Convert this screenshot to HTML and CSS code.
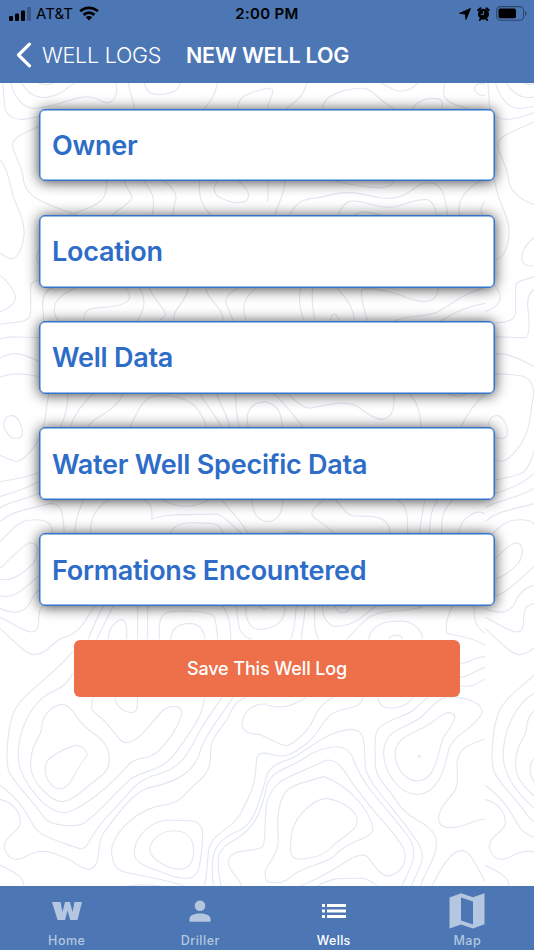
FILE: index.html
```
<!DOCTYPE html>
<html lang="en">
<head>
  <meta charset="UTF-8">
  <meta name="viewport" content="width=device-width, initial-scale=1.0">
  <title>New Well Log</title>
  <link rel="stylesheet" href="styles.css">
</head>
<body>

<header class="header">
  <div class="status">
    <div class="status-left">
      <svg class="signal" viewBox="0 0 22 14" width="22" height="14">
        <rect x="0" y="9" width="4" height="5" rx="1"/>
        <rect x="6" y="6.500" width="4" height="7.500" rx="1"/>
        <rect x="12" y="3.500" width="4" height="10.500" rx="1"/>
        <rect x="18" y="0" width="4" height="14" rx="1" opacity=".25"/>
      </svg>
      <span class="carrier">AT&amp;T</span>
      <svg class="wifi" viewBox="0 0 20 15" width="20" height="15">
        <path d="M1.200 5.300C6 .7 14 .7 18.800 5.300M4.600 8.900c3.200-2.900 7.600-2.900 10.800 0" fill="none" stroke="#000" stroke-width="2.800"/>
        <path d="M6.700 11.100c2-1.600 4.600-1.600 6.600 0L10 14.500z"/>
      </svg>
    </div>
    <span class="clock">2:00 PM</span>
    <div class="status-right">
      <svg viewBox="0 0 12 12" width="12" height="12"><path d="M11.500.5 7 11.500 6.300 6 .5 5.400z" stroke="#000" stroke-width=".9" stroke-linejoin="round"/></svg>
      <svg viewBox="0 0 13 14" width="13" height="14">
        <circle cx="6.500" cy="7.200" r="5.500"/>
        <path d="M1.200 3.300 3.500 1.200M11.800 3.300 9.500 1.200M2.800 13l1.200-1.500M10.200 13 9 11.500" stroke="#000" stroke-width="1.900" stroke-linecap="round"/>
        <path d="M6.600 4v3.500H4" fill="none" stroke="#4c76b4" stroke-width="1"/>
      </svg>
      <svg viewBox="0 0 32 15" width="32" height="15">
        <rect x=".6" y=".6" width="27" height="13.600" rx="3.800" fill="none" stroke="#000" stroke-opacity=".4" stroke-width="1.100"/>
        <rect x="2.500" y="2.500" width="17.500" height="9.800" rx="1.700"/>
        <path d="M29 5c2 .6 2 4.200 0 4.800z" opacity=".4"/>
      </svg>
    </div>
  </div>
  <div class="nav">
    <svg class="back" viewBox="0 0 16 26" width="16" height="26"><path d="M13.500 2.200 2.500 13l11 10.800" fill="none" stroke="#fff" stroke-width="3.200" stroke-linecap="round" stroke-linejoin="round"/></svg>
    <span class="nav-back">WELL LOGS</span>
    <h1 class="nav-title">NEW WELL LOG</h1>
  </div>
</header>

<main class="main">
  <!-- topographic lines, one 485px tile repeated across -->
  <svg class="topo" viewBox="0 249 1602 2409" width="534" height="803">
    <defs>
      <pattern id="topo" width="1455" height="2700" patternUnits="userSpaceOnUse">
        <g fill="none" stroke="#e2e8f2" stroke-width="3.500">
          <g transform="translate(0 240)">
            <path d="M8 0 14 80C18 105 40 120 70 118 100 117 125 106 147 98M30 0C40 50 70 85 100 85 150 85 170 70 230 55 290 40 300 70 325 68 350 65 355 30 345 0M60 0C80 40 110 55 140 52 190 45 200 20 225 9L235 0M100 0C130 20 150 18 175 0"/>
            <path d="M147 126C80 155 38 170 38 195 38 220 70 260 70 300 80 360 150 375 230 405M0 240C20 260 30 310 40 350 60 400 75 430 72 465 68 510 50 540 30 536 10 530 5 520 0 518M0 586C30 610 55 645 43 665 35 680 15 690 0 695"/>
            <path d="M0 733C30 725 92 735 92 695V620C92 605 105 603 150 590M0 778C30 765 70 773 118 773 140 773 130 700 128 680 126 650 135 630 160 622M150 470C110 500 95 550 130 557L147 558"/>
            <path d="M320 303C320 350 310 365 270 382 240 395 220 403 200 405M372 303C380 330 400 345 396 355 385 375 355 385 338 405M432 303C450 330 470 345 456 405M492 303C520 325 530 340 528 355 520 385 520 390 519 405M598 303C597 350 600 370 632 405M655 303C635 320 640 345 665 355 690 368 715 372 738 364 755 345 740 320 715 303"/>
            <path d="M384 0C388 40 400 60 404 85M430 0C440 45 460 45 490 43 530 38 540 25 542 0M655 0C645 45 635 60 612 85M712 85C715 50 740 40 801 24 830 28 818 35 801 85"/>
            <path d="M225 624C190 640 160 660 163 695 165 710 172 718 178 724M375 622C400 650 390 665 360 675 300 690 245 670 253 724M418 622C440 660 435 690 410 724M447 622C460 660 500 690 497 705 490 715 480 718 478 724M565 622C560 670 510 690 524 724M617 622C620 660 670 680 670 724M720 622C680 640 670 660 682 680 690 700 695 710 700 724M770 622C735 650 720 680 740 724"/>
          </g>
          <g transform="translate(801 240)">
            <path d="M122 0C105 70 70 70 58 85M165 85C180 55 170 55 230 32 330 10 300 40 378 85M325 0C380 30 390 35 405 33 435 30 440 18 465 0M435 85C460 60 470 55 510 55 530 60 527 75 525 85M534 0C530 40 525 50 540 60 555 75 580 78 603 85M655 45C635 50 620 35 623 22 630 8 645 8 654 14"/>
            <path d="M2 303C5 350 3 360 0 365M54 303C55 340 30 375 24 405M67 405C100 345 130 360 170 350 250 325 290 345 340 354 440 365 430 300 500 310 530 320 535 360 542 405M213 405C235 350 260 360 310 372 400 400 400 360 480 358 500 365 505 385 509 405M262 405C285 390 300 395 340 405M205 303C250 315 280 320 330 323 360 322 375 318 380 303M578 405C565 355 610 320 640 303M654 365C640 380 640 390 645 405"/>
            <path d="M102 622C92 660 98 690 112 724M138 622C130 660 140 690 143 724M210 622C250 670 260 690 263 724M190 724C195 690 210 700 218 724M302 724C285 670 280 640 285 628 310 620 370 635 400 645 460 670 485 670 500 655 513 642 514 635 514 622M385 724C410 705 450 715 510 697 560 670 570 650 654 622M520 724C560 700 580 685 654 670"/>
          </g>
          <g transform="translate(0 1050)">
            <path d="M0 25C40 0 70 8 147 50M0 82C40 65 75 73 110 78 150 90 150 130 140 165 135 220 130 240 110 280 80 320 60 340 40 332 15 325 10 320 0 315M38 197C10 195 5 230 20 245 30 270 60 270 66 255 72 235 55 200 38 197M0 395C50 385 100 380 118 365 140 340 145 310 150 290M0 440C40 425 100 415 147 370M0 473C50 445 90 450 147 415"/>
            <path d="M0 515C40 480 80 480 150 460 185 460 188 480 193 550M0 575C50 520 70 510 95 510 150 505 155 530 158 550M0 655C40 620 60 590 90 578 125 580 110 625 100 640 60 680 30 695 0 687M0 737C40 750 70 720 147 650M0 775C30 790 70 795 90 760 105 720 130 710 147 707"/>
            <path d="M202 130C207 160 195 200 182 232M280 130C245 165 225 190 210 232M372 130C340 190 280 200 262 232M390 232C415 180 430 135 475 137 570 135 600 170 620 232M598 130C615 160 650 200 665 232M650 130C660 165 680 190 690 232M707 130C705 180 715 210 717 232M801 155C760 155 730 180 745 232"/>
            <path d="M250 450C230 500 227 510 225 550M325 450C280 480 270 510 272 550M430 450C455 460 458 480 455 507 500 490 560 495 650 492 670 495 690 520 725 550M490 450C530 475 580 475 625 450M510 550C530 510 580 518 630 520 660 520 665 540 670 550M665 450C700 490 720 510 745 550M755 450C760 490 770 510 801 515"/>
          </g>
          <g transform="translate(801 1050)">
            <path d="M20 130C60 165 80 200 110 232M0 158C35 165 45 200 45 232M65 135C100 165 110 175 130 174 180 165 230 150 270 168 310 200 345 220 365 200 385 185 382 150 380 130M428 130C450 160 460 180 462 232M540 130C560 140 580 145 600 130M655 132C620 165 600 190 582 232"/>
            <path d="M48 450C45 500 25 515 0 515M203 550C160 510 130 505 135 485 145 465 165 458 170 450M205 450C235 480 240 495 260 498 310 500 365 490 370 550M390 450C415 460 423 480 422 550M473 450C465 500 460 520 458 550M513 450C490 480 490 510 487 550M558 450C525 480 523 510 524 550M655 495C640 470 580 500 575 550M50 550C70 543 90 543 110 550"/>
          </g>
          <g transform="translate(0 1800)">
            <path d="M0 52C40 70 70 95 95 96 125 95 110 60 120 30 122 20 130 15 147 10M0 85C50 130 80 165 105 164 150 160 160 115 200 110 250 90 260 50 285 17"/>
            <path d="M220 152C150 240 60 280 38 345 20 400 18 480 25 510 40 550 90 590 130 650 150 680 220 680 245 673 290 650 340 580 395 535 440 505 490 520 540 440 590 370 610 340 613 290"/>
            <path d="M220 218C200 255 180 265 150 278 90 310 50 400 55 480 65 550 140 640 195 638 240 630 330 560 380 500 410 465 430 485 470 458 500 430 530 390 545 345 550 320 520 310 490 330 450 370 420 425 380 428 355 430 340 380 290 343 275 330 270 330 280 290"/>
            <path d="M183 313C150 320 125 350 125 385 120 420 90 430 92 500 95 550 160 610 190 604 220 600 230 585 300 530 330 510 335 480 320 440 300 400 260 400 230 350 215 325 200 312 183 313M230 436C200 440 150 470 140 485 125 520 150 570 185 566 215 560 225 510 262 465 260 450 245 435 230 436"/>
            <path d="M0 555C60 600 80 640 105 685 140 720 200 730 240 747 265 750 270 700 330 640 390 580 400 550 450 530 540 510 560 470 590 410 610 370 640 330 668 290"/>
            <path d="M0 598C50 610 65 650 60 675 50 700 10 710 13 745 30 790 60 780 80 768 130 740 160 760 200 775 230 790 240 805 265 808 310 800 285 740 310 700 370 620 390 590 440 565 510 550 570 530 595 470 615 400 650 370 700 290"/>
            <path d="M740 290C715 300 705 310 690 340 680 370 650 390 635 430 625 460 645 500 600 540 550 580 550 605 500 614 420 620 330 700 335 760 340 800 350 812 390 820 430 828 500 840 555 858"/>
            <path d="M0 795C50 820 70 830 72 858M345 290C345 320 375 338 395 338 415 335 412 320 412 290M290 118 340 17M265 118C280 80 290 50 312 17M325 118C325 80 350 60 367 58 380 65 382 90 380 118M413 17V118M443 17V118M478 118C475 60 480 35 520 34 560 33 600 30 640 45 650 60 650 90 653 118M512 118C515 80 540 72 567 70 600 70 612 90 615 118M668 17C690 50 690 80 693 118M710 17C715 70 710 105 755 118M737 17C735 60 750 100 801 85M778 17C790 30 795 28 801 26"/>
            <path d="M801 312C750 310 730 340 725 375 735 405 760 402 780 404L801 413M801 460C770 455 770 470 768 500 765 570 740 600 720 645 680 700 630 700 625 760 620 800 622 830 612 858M801 524C775 620 760 670 720 690 650 720 640 750 637 790 635 820 640 840 640 858M801 553C785 640 760 690 700 722 645 750 655 780 655 810L663 858M801 605C790 680 800 720 788 740 760 760 700 740 686 780 680 810 720 835 725 858M801 800C792 820 795 835 801 845"/>
            <path d="M495 660C440 670 400 720 403 765 410 800 480 810 520 830 560 840 590 840 598 800 605 760 610 720 607 690 595 650 560 665 495 660M515 693C480 693 445 725 450 755 460 780 500 805 535 807 570 810 585 780 580 740 575 700 545 690 515 693M380 858C410 854 450 854 480 858"/>
          </g>
          <g transform="translate(801 1800)">
            <path d="M0 85C40 80 55 50 54 17M88 17C85 60 80 100 70 118M115 17C112 60 105 90 103 118M143 17C143 70 140 90 155 118M167 17C165 60 190 85 220 78 280 70 290 40 330 17M203 17C210 40 235 50 255 17M240 118C290 60 310 40 360 35 410 30 450 30 472 17M305 118C310 80 350 62 390 64 440 60 465 90 467 118M367 118C365 102 405 102 407 118"/>
            <path d="M557 17C540 50 535 80 540 100 560 108 600 105 654 135M622 17C620 60 625 80 654 99M580 190C610 190 620 170 654 170M580 232C610 230 625 210 654 202M580 258C620 262 630 250 654 236M0 315C50 330 80 315 120 290M0 413C60 445 60 445 100 410 155 365 130 330 200 290"/>
            <path d="M0 460C60 480 80 460 120 430 170 390 160 350 220 330 270 320 285 315 288 290M0 524C20 480 60 490 100 460 160 420 200 390 255 388 300 390 290 440 295 500 300 550 380 620 440 710 485 765 465 790 432 858"/>
            <path d="M0 553C25 500 70 510 130 462 180 440 240 420 260 480 290 570 380 640 430 720 455 770 430 800 405 858M0 605C25 535 50 540 180 480 230 480 240 540 280 580 320 640 380 690 410 745 430 800 380 835 355 826 320 815 310 760 285 765 240 770 220 810 100 858"/>
            <path d="M0 800C55 730 25 700 33 650 40 570 70 560 100 550L170 530C230 550 310 620 318 690 310 720 240 720 200 770 150 800 100 800 60 840 40 850 20 850 0 845M178 595C130 600 75 660 73 710 68 750 65 780 100 777 150 775 180 760 200 735 240 700 275 690 270 655 260 620 210 600 178 595M150 858C200 830 220 835 290 835 310 840 320 850 330 858"/>
            <path d="M460 858C480 800 520 760 505 710 490 670 430 660 400 620 370 570 330 540 325 500 325 440 320 400 335 385 370 350 430 350 450 320L485 290M333 290C335 330 370 325 390 323 410 318 430 310 438 290"/>
            <path d="M540 290C600 290 650 310 645 340 620 390 560 400 545 450 530 520 510 580 450 584 390 580 350 510 350 460 350 380 420 390 470 345 500 310 520 295 540 290M545 338C580 340 560 370 530 410 510 460 510 540 450 543 400 540 380 480 385 450 400 400 450 400 490 370 520 350 530 338 545 338"/>
            <path d="M654 417C600 435 575 445 570 490 570 540 580 560 545 595 500 650 510 675 540 683 600 685 610 660 654 657M495 858C520 810 550 750 585 752 615 755 620 790 663 858"/>
            <circle cx="457" cy="469" r="3"/>
          </g>
        </g>
      </pattern>
    </defs>
    <rect y="249" width="1602" height="2409" fill="url(#topo)"/>
  </svg>

  <div class="sections">
    <a class="section">Owner</a>
    <a class="section">Location</a>
    <a class="section">Well Data</a>
    <a class="section">Water Well Specific Data</a>
    <a class="section">Formations Encountered</a>
    <button class="save" type="button">Save This Well Log</button>
  </div>
</main>

<nav class="tabs">
  <a class="tab">
    <svg viewBox="0 0 30 20" width="30" height="36"><path d="M0 1h8.500l2 10L13 1h5l2.500 10 2-10H30l-4.500 18h-7.300L15.600 9.500 13 19H5.500z"/></svg>
    <span>Home</span>
  </a>
  <a class="tab">
    <svg viewBox="0 0 22 36" width="22" height="36"><circle cx="11" cy="12.800" r="5.300"/><path d="M.5 28.700v-2.900c0-7 21-7 21 0v2.900z"/></svg>
    <span>Driller</span>
  </a>
  <a class="tab active">
    <svg viewBox="0 0 24 36" width="24" height="36"><path d="M0 11h3v3H0zM5 11h19v3H5zM0 16.500h3v3H0zM5 16.500h19v3H5zM0 22h3v3H0zM5 22h19v3H5z"/></svg>
    <span>Wells</span>
  </a>
  <a class="tab">
    <svg viewBox="0 0 36 36" width="36" height="36"><path fill-rule="evenodd" d="M.5 4.500 12 .3l12 4L35.500.3v31L24 35.500l-12-4-11.500 4zM12 4.500v23l12 4v-23z"/></svg>
    <span>Map</span>
  </a>
</nav>

</body>
</html>
```
FILE: styles.css
```
body {
  font-family: Inter, "Liberation Sans", sans-serif;
  margin: 0;
  height: 950px;
  display: flex;
  flex-direction: column;
  overflow: hidden;
  background: #fff;
}
svg {
  display: block;
  flex: none;
}
.header {
  height: 83px;
  flex: none;
  background: #4c76b4;
}
.status {
  display: grid;
  grid-template-columns: 1fr auto 1fr;
  align-items: center;
  height: 27px;
  padding: 0 6px 0 9px;
  font-size: 15px;
  color: #000;
}
.status-left,
.status-right {
  display: flex;
  align-items: center;
}
.carrier {
  margin: 0 6px 1px 5px;
  font-size: 15px;
  letter-spacing: 0.1px;
}
.status-right {
  justify-content: flex-end;
  gap: 6px;
}
.clock {
  font-weight: 560;
  letter-spacing: 0.3px;
  margin-left: -3px;
}
.nav {
  display: flex;
  align-items: center;
  height: 55px;
  padding-left: 16px;
  color: #fff;
}
.nav-back {
  margin-left: 10px;
  width: 144px;
  font-size: 21.5px;
  font-weight: 300;
  letter-spacing: -0.25px;
  white-space: nowrap;
}
.nav-title {
  margin: 0;
  font-size: 21.5px;
  font-weight: 560;
  letter-spacing: -0.2px;
  white-space: nowrap;
}
.main {
  flex: 1;
  min-height: 0;
  display: grid;
  grid-template: 803px / 534px;
}
.topo,
.sections {
  grid-area: 1 / 1;
}
.sections {
  z-index: 1;
  display: flex;
  flex-direction: column;
  align-items: center;
  gap: 33.4px;
  padding-top: 25.6px;
}
.section {
  box-sizing: border-box;
  display: flex;
  align-items: center;
  width: 456px;
  height: 72.8px;
  padding: 1px 0 0 12px;
  border: 1px solid #3374cd;
  border-radius: 6px;
  background: #fff;
  box-shadow: inset 0 0 0 0.5px #3374cd, 0 1px 14px rgba(0, 0, 0, 0.75);
  color: #2d6dc8;
  font-size: 27px;
  font-weight: 570;
  letter-spacing: -0.24px;
  white-space: nowrap;
}
.save {
  width: 386px;
  height: 57px;
  border: none;
  border-radius: 6px;
  background: #ed704a;
  color: #fff;
  font-family: inherit;
  font-size: 18px;
  font-weight: 550;
  letter-spacing: -0.12px;
}
.tabs {
  display: grid;
  grid-template-columns: repeat(4, 1fr);
  height: 64px;
  flex: none;
  background: #4c76b4;
}
.tab {
  display: flex;
  flex-direction: column;
  align-items: center;
  padding-top: 7px;
  color: #b5c6e0;
  fill: #b5c6e0;
  font-size: 12.5px;
  line-height: 15px;
  font-weight: 450;
  letter-spacing: 0.5px;
}
.tab span {
  margin-top: 4px;
}
.tab.active {
  color: #fff;
  fill: #fff;
  font-weight: 500;
  letter-spacing: 0.3px;
}
```
